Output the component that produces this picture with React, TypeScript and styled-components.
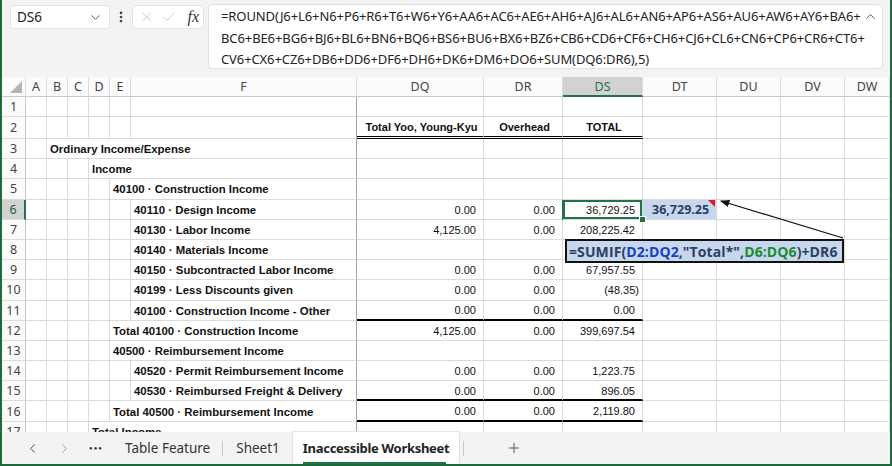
import React from "react";
import styled, { createGlobalStyle, css } from "styled-components";
import { ChevronDown, ChevronUp, ChevronLeft, ChevronRight, X, Check, Plus, EllipsisVertical } from "lucide-react";

const GREEN = "#217346";
const FRAME = "#1d6b3c";
const GRID = "#dadada";
const UI_FONT = `"Noto Sans", "Open Sans", sans-serif`;
const CELL_FONT = `"Liberation Sans", Arial, sans-serif`;

const GlobalStyle = createGlobalStyle`
  html, body { margin: 0; padding: 0; background: #f3f3f3; }
  body { font-family: ${CELL_FONT}; }
`;

const Frame = styled.div`
  width: 892px;
  height: 466px;
  box-sizing: border-box;
  border-left: 2px solid ${FRAME};
  border-right: 2px solid ${FRAME};
  border-bottom: 2px solid ${FRAME};
  background: #f3f3f3;
  display: flex;
  flex-direction: column;
  overflow: hidden;
`;

/* ---------- formula bar ---------- */
const FormulaBar = styled.div`
  height: 77px;
  flex: none;
  display: flex;
  align-items: flex-start;
  padding: 5px 0 0 8px;
  box-sizing: border-box;
`;

const Box = styled.div`
  background: #fff;
  border: 1px solid #e2e2e2;
  border-radius: 4px;
  box-sizing: border-box;
`;

const NameBox = styled(Box)`
  width: 100px;
  height: 24px;
  display: flex;
  align-items: center;
  justify-content: space-between;
  padding: 0 6px 0 6px;
  font-family: ${UI_FONT};
  font-size: 13.5px;
  color: #222;
`;

const Divider = styled.div`
  width: 22px;
  height: 24px;
  display: flex;
  align-items: center;
  justify-content: center;
  color: #444;
`;

const FxBox = styled(Box)`
  width: 72px;
  height: 24px;
  display: flex;
  align-items: center;
  padding: 0 4px 0 6px;
  gap: 6px;
  color: #c2c2c2;
`;

const Fx = styled.span`
  margin-left: 5px;
  font-family: "Liberation Serif", "DejaVu Serif", serif;
  font-style: italic;
  font-size: 16px;
  color: #333;
`;

const FormulaInput = styled(Box)`
  margin: -1px 0 0 4px;
  width: 675px;
  height: 65px;
  position: relative;
  padding: 1px 24px 0 12px;
  font-family: ${UI_FONT};
  font-size: 13px;
  letter-spacing: -0.1px;
  line-height: 21.5px;
  color: #222;
`;

const FormulaLine = styled.div`
  white-space: nowrap;
`;

const Expand = styled.div`
  position: absolute;
  top: 4px;
  right: 4px;
  color: #444;
`;

/* ---------- sheet grid ---------- */
const Sheet = styled.div`
  flex: none;
  height: 355px;
  position: relative;
  overflow: hidden;
  background: #fff;
  display: grid;
  grid-template-columns: 24px 21px 21px 21px 21px 21px 226px 127px 79px 80px 74px 64px 64px 1fr;
  grid-template-rows: 20px 20px 22px repeat(15, 20.2px);
`;

const ColHead = styled.div<{ $active?: boolean }>`
  box-sizing: border-box;
  position: relative;
  background: #fbfbfb;
  border-right: 1px solid #dcdcdc;
  border-bottom: 1px solid #c8c8c8;
  display: flex;
  align-items: center;
  justify-content: center;
  font-family: ${UI_FONT};
  font-size: 12.5px;
  color: #444;
  ${(p) =>
    p.$active &&
    css`
      background: #d2d2d2;
      color: ${GREEN};
      border-bottom: 2px solid ${GREEN};
    `}
`;

const SelectAll = styled.div`
  position: absolute;
  right: 3px;
  bottom: 3px;
  width: 0;
  height: 0;
  border-left: 12px solid transparent;
  border-bottom: 12px solid #b5b5b5;
`;

const RowHead = styled.div<{ $active?: boolean }>`
  box-sizing: border-box;
  background: #fbfbfb;
  border-right: 1px solid #c8c8c8;
  border-bottom: 1px solid #dcdcdc;
  display: flex;
  align-items: center;
  justify-content: center;
  font-family: ${UI_FONT};
  font-size: 12.5px;
  color: #444;
  ${(p) =>
    p.$active &&
    css`
      background: #d2d2d2;
      color: #1f5c36;
      border-right: 2px solid ${GREEN};
    `}
`;

type Rule = "double" | "thick";

const Cell = styled.div<{
  $span?: number;
  $frozen?: boolean;
  $bold?: boolean;
  $label?: boolean;
  $align?: "left" | "right" | "center";
  $rule?: Rule;
  $selected?: boolean;
}>`
  box-sizing: border-box;
  position: relative;
  min-width: 0;
  grid-column: span ${(p) => p.$span ?? 1};
  border-right: 1px solid ${(p) => (p.$frozen ? "#a3a3a3" : GRID)};
  border-bottom: 1px solid ${GRID};
  display: flex;
  align-items: center;
  justify-content: ${(p) =>
    p.$align === "right" ? "flex-end" : p.$align === "center" ? "center" : "flex-start"};
  padding: ${(p) => (p.$align === "right" ? "1px 7px 0 0" : "1px 0 0 3px")};
  font-family: ${CELL_FONT};
  font-size: ${(p) => (p.$label ? "11.4px" : "11px")};
  font-weight: ${(p) => (p.$bold ? 700 : 400)};
  color: #111;
  white-space: nowrap;
  ${(p) =>
    p.$rule === "double" &&
    css`
      border-bottom: 3px double #000;
    `}
  ${(p) =>
    p.$rule === "thick" &&
    css`
      border-bottom: 2px solid #000;
    `}
  ${(p) =>
    p.$selected &&
    css`
      z-index: 2;
      box-shadow: inset 0 0 0 2px ${GREEN}, -1px 0 0 0 ${GREEN};
    `}
`;

const Negative = styled.span`
  margin-right: -4px;
`;

const FillHandle = styled.div`
  position: absolute;
  right: -4px;
  bottom: -4px;
  width: 5px;
  height: 5px;
  background: ${GREEN};
  border: 1px solid #fff;
`;

const NoteCell = styled(Cell)`
  background: #c6d7ee;
  padding-left: 9px;
  font-family: "Open Sans", ${UI_FONT};
  font-size: 12.5px;
  font-weight: 700;
  color: #2e3f5f;
`;

const NoteMark = styled.div`
  position: absolute;
  top: 0;
  right: 1px;
  width: 0;
  height: 0;
  border-left: 7px solid transparent;
  border-top: 7px solid #e8141b;
`;

const Callout = styled.div`
  position: absolute;
  left: 563px;
  top: 162px;
  width: 279px;
  height: 24px;
  box-sizing: border-box;
  border: 2px solid #111;
  background: #c6d7ee;
  display: flex;
  align-items: center;
  padding-left: 2px;
  font-family: "Open Sans", ${UI_FONT};
  font-size: 14px;
  letter-spacing: 0.1px;
  font-weight: 700;
  color: #2e3f5f;
  white-space: nowrap;
  overflow: hidden;
  z-index: 3;
`;

const Ref = styled.span<{ $tone: "blue" | "green" }>`
  color: ${(p) => (p.$tone === "blue" ? "#1c3fbd" : "#1f8a32")};
`;

const Arrow = styled.svg`
  position: absolute;
  left: 0;
  top: 0;
  width: 890px;
  height: 355px;
  pointer-events: none;
  z-index: 4;
`;

/* ---------- sheet tabs ---------- */
const TabBar = styled.div`
  flex: 1;
  display: flex;
  align-items: stretch;
  padding-left: 14px;
  font-family: ${UI_FONT};
  font-size: 13.5px;
  color: #333;
`;

const Nav = styled.div<{ $dim?: boolean }>`
  width: 32px;
  display: flex;
  align-items: center;
  justify-content: center;
  color: ${(p) => (p.$dim ? "#9a9a9a" : "#444")};
`;

const Dots = styled.span`
  font-size: 6px;
  letter-spacing: 1px;
  color: #333;
`;

const Tab = styled.div<{ $active?: boolean; $sep?: boolean }>`
  position: relative;
  display: flex;
  align-items: center;
  padding: 0 ${(p) => (p.$active ? "10px" : "13px")};
  ${(p) =>
    p.$sep &&
    css`
      &::after {
        content: "";
        position: absolute;
        right: 0;
        top: 9px;
        bottom: 8px;
        width: 1px;
        background: #c8c8c8;
      }
    `}
  ${(p) =>
    p.$active &&
    css`
      background: #fff;
      font-size: 13px;
      letter-spacing: -0.3px;
      font-weight: 700;
      color: #222;
      box-shadow: 0 0 0 1px #e4e4e4;
    `}
`;

const TabLabel = styled.span<{ $active?: boolean }>`
  position: relative;
  ${(p) =>
    p.$active &&
    css`
      &::after {
        content: "";
        position: absolute;
        left: 0;
        right: 3px;
        bottom: -7px;
        height: 2px;
        background: ${GREEN};
      }
    `}
`;

const Sep = styled.div`
  width: 1px;
  margin: 9px 0 8px 4px;
  background: #c8c8c8;
`;

const AddSheet = styled.div`
  width: 100px;
  display: flex;
  align-items: center;
  justify-content: center;
  color: #444;
`;

/* ---------- data ---------- */
const COLS = ["A", "B", "C", "D", "E", "F", "DQ", "DR", "DS", "DT", "DU", "DV", "DW"];
const START: Record<string, number> = { A: 0, B: 1, C: 2, D: 3, E: 4, F: 5 };

type Row = {
  n: number;
  label?: string;
  at?: string;
  vals?: string[];
  heads?: string[];
  rule?: Rule;
};

const ROWS: Row[] = [
  { n: 1 },
  { n: 2, heads: ["Total Yoo, Young-Kyu", "Overhead", "TOTAL"], rule: "double" },
  { n: 3, label: "Ordinary Income/Expense", at: "B" },
  { n: 4, label: "Income", at: "D" },
  { n: 5, label: "40100 · Construction Income", at: "E" },
  { n: 6, label: "40110 · Design Income", at: "F", vals: ["0.00", "0.00", "36,729.25"] },
  { n: 7, label: "40130 · Labor Income", at: "F", vals: ["4,125.00", "0.00", "208,225.42"] },
  { n: 8, label: "40140 · Materials Income", at: "F" },
  { n: 9, label: "40150 · Subcontracted Labor Income", at: "F", vals: ["0.00", "0.00", "67,957.55"] },
  { n: 10, label: "40199 · Less Discounts given", at: "F", vals: ["0.00", "0.00", "(48.35)"] },
  { n: 11, label: "40100 · Construction Income - Other", at: "F", vals: ["0.00", "0.00", "0.00"], rule: "thick" },
  { n: 12, label: "Total 40100 · Construction Income", at: "E", vals: ["4,125.00", "0.00", "399,697.54"] },
  { n: 13, label: "40500 · Reimbursement Income", at: "E" },
  { n: 14, label: "40520 · Permit Reimbursement Income", at: "F", vals: ["0.00", "0.00", "1,223.75"] },
  { n: 15, label: "40530 · Reimbursed Freight & Delivery", at: "F", vals: ["0.00", "0.00", "896.05"], rule: "thick" },
  { n: 16, label: "Total 40500 · Reimbursement Income", at: "E", vals: ["0.00", "0.00", "2,119.80"], rule: "thick" },
  { n: 17, label: "Total Income", at: "D" },
];

const FORMULA = [
  "=ROUND(J6+L6+N6+P6+R6+T6+W6+Y6+AA6+AC6+AE6+AH6+AJ6+AL6+AN6+AP6+AS6+AU6+AW6+AY6+BA6+",
  "BC6+BE6+BG6+BJ6+BL6+BN6+BQ6+BS6+BU6+BX6+BZ6+CB6+CD6+CF6+CH6+CJ6+CL6+CN6+CP6+CR6+CT6+",
  "CV6+CX6+CZ6+DB6+DD6+DF6+DH6+DK6+DM6+DO6+SUM(DQ6:DR6),5)",
];

function SheetRow({ row }: { row: Row }) {
  const at = row.at ? START[row.at] : 6;
  const left = [];
  for (let i = 0; i < at; i++) left.push(<Cell key={`e${i}`} $frozen={i === 5} />);
  const dataCells = [0, 1, 2].map((i) => {
    const v = row.vals?.[i];
    const selected = row.n === 6 && i === 2;
    return (
      <Cell
        key={`d${i}`}
        $align={row.heads ? "center" : "right"}
        $bold={!!row.heads}
        $rule={row.rule}
        $selected={selected}
      >
        {row.heads ? row.heads[i] : v?.startsWith("(") ? <Negative>{v}</Negative> : v}
        {selected && <FillHandle />}
      </Cell>
    );
  });
  return (
    <>
      <RowHead $active={row.n === 6}>{row.n}</RowHead>
      {left}
      {row.label && (
        <Cell $span={6 - at} $frozen $bold $label>
          {row.label}
        </Cell>
      )}
      {dataCells}
      {row.n === 6 ? (
        <NoteCell>
          36,729.25
          <NoteMark />
        </NoteCell>
      ) : (
        <Cell />
      )}
      <Cell />
      <Cell />
      <Cell />
    </>
  );
}

export default function App() {
  return (
    <>
      <GlobalStyle />
      <Frame>
        <FormulaBar>
          <NameBox>
            <span>DS6</span>
            <ChevronDown size={15} strokeWidth={1.5} color="#555" />
          </NameBox>
          <Divider>
            <EllipsisVertical size={14} strokeWidth={2.5} />
          </Divider>
          <FxBox>
            <X size={16} strokeWidth={1.3} />
            <Check size={16} strokeWidth={1.3} />
            <Fx>fx</Fx>
          </FxBox>
          <FormulaInput>
            {FORMULA.map((l) => (
              <FormulaLine key={l}>{l}</FormulaLine>
            ))}
            <Expand>
              <ChevronUp size={15} strokeWidth={1.5} />
            </Expand>
          </FormulaInput>
        </FormulaBar>

        <Sheet>
          <ColHead>
            <SelectAll />
          </ColHead>
          {COLS.map((c) => (
            <ColHead key={c} $active={c === "DS"}>
              {c}
            </ColHead>
          ))}
          {ROWS.map((r) => (
            <SheetRow key={r.n} row={r} />
          ))}

          <Callout>
            =SUMIF(<Ref $tone="blue">D2:DQ2</Ref>,"Total*",<Ref $tone="green">D6:DQ6</Ref>)+DR6
          </Callout>
          <Arrow viewBox="0 0 890 355">
            <defs>
              <marker id="head" markerWidth="8" markerHeight="6" refX="7" refY="3" orient="auto">
                <path d="M0,0 L8,3 L0,6 Z" fill="#111" />
              </marker>
            </defs>
            <line x1="841" y1="161" x2="719" y2="124" stroke="#111" strokeWidth="1.2" markerEnd="url(#head)" />
          </Arrow>
        </Sheet>

        <TabBar>
          <Nav>
            <ChevronLeft size={15} strokeWidth={1.5} />
          </Nav>
          <Nav $dim>
            <ChevronRight size={15} strokeWidth={1.5} />
          </Nav>
          <Nav>
            <Dots>●●●</Dots>
          </Nav>
          <Tab $sep>Table Feature</Tab>
          <Tab>Sheet1</Tab>
          <Tab $active>
            <TabLabel $active>Inaccessible Worksheet</TabLabel>
          </Tab>
          <Sep />
          <AddSheet>
            <Plus size={16} strokeWidth={1.3} />
          </AddSheet>
        </TabBar>
      </Frame>
    </>
  );
}
